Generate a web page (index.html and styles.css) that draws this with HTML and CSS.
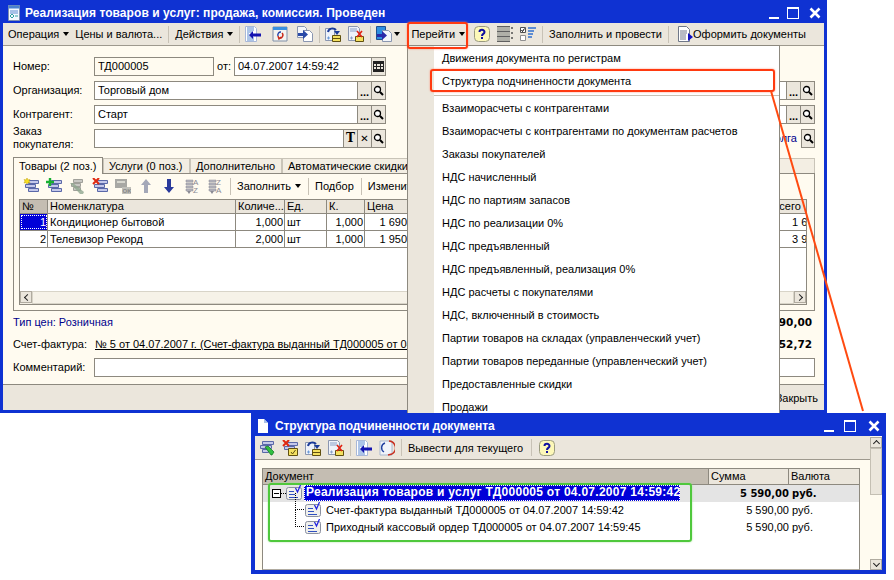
FILE: index.html
```html
<!DOCTYPE html>
<html lang="en">
<head>
  <meta charset="UTF-8" />
  <title>Структура подчиненности документа</title>
  <link rel="stylesheet" href="styles.css">
</head>
<body>
  <svg class="defs" width="0" height="0">
    <defs>
      <symbol id="i-form" viewBox="0 0 12 16"><path d="M.5 .5h11v15H.5z" fill="#f4f8ff" stroke="#8090b0"/><path d="M.5 .5h11v3H.5z" fill="#4a80d0"/><path d="M2 6h8M2 8h8" stroke="#5a8ad0"/><path d="M2 11l2 2 2-2-2-2zM7 11h3" fill="none" stroke="#30a0a0"/></symbol>
      <symbol id="i-back" viewBox="0 0 16 16"><path d="M.5 .5h9l2 2v13H.5z" fill="#fff" stroke="#a8b8d8"/><path d="M2 2h7M2 4h7M2 6h5M2 8h2M2 10h4M2 12h7M2 14h7" stroke="#5a8ad0"/><path d="M4 9l4-4v2.500h8v3H8V13z" fill="#1414b0"/></symbol>
      <symbol id="i-cal" viewBox="0 0 16 16"><path d="M1 1h14v14H1z" fill="#f4f4f0" stroke="#8090a8"/><path d="M1 1h14v3H1z" fill="#3a90e0"/><path d="M9 6a3 3 0 00-3 4" fill="none" stroke="#2040a8" stroke-width="1.400"/><path d="M7 12a3 3 0 003-5M6 10l1 3 2-2" fill="none" stroke="#c82818" stroke-width="1.400"/></symbol>
      <symbol id="i-pages" viewBox="0 0 16 16"><path d="M.5 .5h7l2 2v9h-9z" fill="#f4f6fa" stroke="#8a96b0"/><path d="M6.500 4.500h6l3 3v8h-9z" fill="#fff" stroke="#8a96b0"/><path d="M1 7h5V4l5 4.500L6 13v-3H1z" fill="#2a4aa8"/></symbol>
      <symbol id="i-doc-up" viewBox="0 0 16 16"><path d="M.5 2.500h9v12h-9z" fill="#eef2fa" stroke="#8a96b0"/><path d="M2 12h3M3.500 10.500v3" stroke="#6a9ad8"/><path d="M7.500 9.500h8v6h-8z" fill="#f4e060" stroke="#605010"/><path d="M7.500 12.500h8" stroke="#605010"/><path d="M3 6a4.500 4 0 018-2" fill="none" stroke="#1a3a98" stroke-width="2"/><path d="M9 5h6l-3 4z" fill="#1a3a98"/></symbol>
      <symbol id="i-doc-x" viewBox="0 0 16 16"><path d="M.5 .5h9l2 2v12H.5z" fill="#eef2fa" stroke="#8a96b0"/><path d="M2 3h7M2 5h7M2 12h3M3.500 10.500v3" stroke="#8aa0c8"/><path d="M7.500 10.500h8v5h-8z" fill="#f4e060" stroke="#605010"/><path d="M9 5l5 6M14 5l-5 6" stroke="#e02010" stroke-width="1.600"/></symbol>
      <symbol id="i-goto" viewBox="0 0 16 16"><path d="M.5 .5h9v13h-9z" fill="#2f8fe0" stroke="#205090"/><path d="M6.500 4.500h6l3 3v8h-9z" fill="#f4f6fa" stroke="#8a96b0"/><path d="M1 8h5V5l5 4.500L6 14v-3H1z" fill="#2a2aa8"/></symbol>
      <symbol id="i-help" viewBox="0 0 16 16"><rect x=".5" y=".5" width="15" height="15" rx="4" fill="#fdf8b8" stroke="#9a9a80"/><path d="M5.500 6a2.500 2.200 0 015 0c0 2-2.500 1.800-2.500 4" fill="none" stroke="#1010a0" stroke-width="2"/><path d="M7 11h2v2H7z" fill="#1010a0"/></symbol>
      <symbol id="i-rows" viewBox="0 0 16 16"><path d="M0 1h13v4H0zM0 6h13v4H0zM0 11h13v4H0z" fill="#b0b0a8"/><path d="M0 .5h13M0 5.500h13M0 10.500h13M0 15.500h13" stroke="#606060"/><path d="M14 2h2M15 1v2M14 7h2M15 6v2M14 12h2M15 11v2" stroke="#505050"/></symbol>
      <symbol id="i-check" viewBox="0 0 16 16"><path d="M.5 1.500h5v5h-5z" fill="#fff" stroke="#505050"/><path d="M1.500 4l1 1.500 2-3" fill="none" stroke="#000"/><path d="M.5 9.500h5v5h-5z" fill="#fff" stroke="#909090"/><path d="M8 2h8M8 5h6M8 8h5M8 11h4" stroke="#3070d0" stroke-width="1.500"/></symbol>
      <symbol id="i-fill" viewBox="0 0 16 16"><path d="M.5 .5h8l3 3v12H.5z" fill="#fff" stroke="#707888"/><path d="M2 5h7M2 7h7M2 9h6M2 11h6M2 13h6" stroke="#707888"/><path d="M10 7l5 4-5 4z" fill="#1010c0"/></symbol>
      <symbol id="i-cols" viewBox="0 0 16 16"><path d="M5.500 2.500h10v3h-10zM2.500 6.500h10v3h-10zM5.500 10.500h10v3h-10z" fill="#c4c8ea" stroke="#5a68a8"/></symbol>
      <symbol id="i-row-new" viewBox="0 0 16 16"><use href="#i-cols"/><path d="M4 0l1 2 2-.500L6 3l1 2-2-.500L4 6 3 4.500 1 5l1-2-1-1.500 2 .500z" fill="#f8e020" stroke="#c0a000" stroke-width=".5"/></symbol>
      <symbol id="i-row-add" viewBox="0 0 16 16"><use href="#i-cols"/><path d="M0 4h8M4 0v8" stroke="#18b030" stroke-width="2.400"/></symbol>
      <symbol id="i-row-edit" viewBox="0 0 16 16"><path d="M4.500 1.500h9v3h-9zM2.500 5.500h9v3h-9zM4.500 9.500h7v3h-7z" fill="#c8c8c4" stroke="#a0a09a"/><path d="M1 5l3 0 11 9-1 2-3 0z" fill="#90a890" opacity=".8"/></symbol>
      <symbol id="i-row-edit2" viewBox="0 0 16 16"><path d="M3.500 1.500h11v3h-11zM1.500 5.500h11v3h-11zM3.500 9.500h6v3h-6z" fill="#c4c8ea" stroke="#5a68a8"/><path d="M6 7l3-1 6 6-2 3-1 0z" fill="#30c040" stroke="#107020" stroke-width=".7"/></symbol>
      <symbol id="i-row-del" viewBox="0 0 16 16"><use href="#i-cols"/><path d="M1 0l6 6M7 0L1 6" stroke="#e02810" stroke-width="2"/></symbol>
      <symbol id="i-row-delbox" viewBox="0 0 16 16"><path d="M5.500 2.500h10v3h-10zM2.500 6.500h10v3h-10z" fill="#c4c8ea" stroke="#5a68a8"/><path d="M1 0l6 6M7 0L1 6" stroke="#e02810" stroke-width="2"/><path d="M6.500 8.500h9v7h-9z" fill="#f4e060" stroke="#605010"/><path d="M9 12l1.500 2 3-4" fill="none" stroke="#605010"/></symbol>
      <symbol id="i-ok" viewBox="0 0 16 16"><path d="M0 1h12v9H0z" fill="#a8a8a4"/><path d="M2 3h8v2H2z" fill="#d8d8d0"/><path d="M7 9h9v7H7z" fill="#c0c0ba"/><text x="7.500" y="15" font-size="6" font-weight="bold" font-family="Liberation Sans" fill="#888">OK</text></symbol>
      <symbol id="i-up" viewBox="0 0 16 16"><path d="M8 1l5 6h-3v8H6V7H3z" fill="#a4a8b8"/></symbol>
      <symbol id="i-down" viewBox="0 0 16 16"><path d="M8 15l5-6h-3V1H6v8H3z" fill="#2a3a9c"/></symbol>
      <symbol id="i-sort" viewBox="0 0 16 16"><path d="M2 2h7v2H2zM2 5h7v2H2zM2 8h7v2H2zM2 11h7v2H2z" fill="#b8b8c0" stroke="#8a8a94" stroke-width=".5"/><path d="M3 13h4l-2 3z" fill="#8a8a94"/></symbol>
      <symbol id="i-doc-check" viewBox="0 0 16 16"><rect x=".5" y="2.500" width="15" height="12" rx="2" fill="#f0f0ec" stroke="#8a90a0"/><path d="M3 6.500h5M3 9.500h6M3 12.500h9" stroke="#3050c0"/><path d="M9.500 3l2 4 3-7" fill="none" stroke="#2020e0" stroke-width="1.200"/></symbol>
      <symbol id="i-refresh" viewBox="0 0 16 16"><path d="M1 1h12v14H1z" fill="#f0f4fa" stroke="#a8b8d0"/><path d="M6 3a5 5 0 00-1 9" fill="none" stroke="#2040a0" stroke-width="1.400"/><path d="M10 1a7 7 0 013 13M9 15l4-1" fill="none" stroke="#c83020" stroke-width="1.400"/></symbol>
      <symbol id="i-find" viewBox="0 0 11 11"><circle cx="4.500" cy="4.500" r="3" fill="#fff" stroke="#000" stroke-width="1.300"/><path d="M7 7l3 3" stroke="#000" stroke-width="2"/></symbol>
      <symbol id="i-calgrid" viewBox="0 0 11 11"><path d="M0 0h11v11H0z" fill="#222"/><path d="M1 3h2v2H1zM4 3h3v2H4zM8 3h2v2H8zM1 6h2v2H1zM4 6h3v2H4zM8 6h2v2H8z" fill="#ebe6dc"/></symbol>
      <symbol id="i-close" viewBox="0 0 12 12"><path d="M1.500 1.500l9 9M10.500 1.500l-9 9" stroke="#fff" stroke-width="2.600"/></symbol>
    </defs>
  </svg>

  <!-- Main document window -->
  <section class="window doc-window">
    <header class="titlebar">
      <svg class="title-icon" width="12" height="16"><use href="#i-form"/></svg>
      <span class="title">Реализация товаров и услуг: продажа, комиссия. Проведен</span>
      <span class="title-btns"><i class="wb wb-min"></i><i class="wb wb-max"></i><svg class="wb"><use href="#i-close"/></svg></span>
    </header>

    <div class="toolbar doc-bar">
      <span class="tb-text">Операция <b class="arrow"></b></span>
      <span class="tb-text">Цены и валюта...</span>
      <i class="sep"></i>
      <span class="tb-text">Действия <b class="arrow"></b></span>
      <i class="sep"></i>
      <svg class="ic"><use href="#i-back"/></svg>
      <svg class="ic ml8"><use href="#i-cal"/></svg>
      <svg class="ic ml6"><use href="#i-pages"/></svg>
      <i class="sep"></i>
      <svg class="ic"><use href="#i-doc-up"/></svg>
      <svg class="ic ml4"><use href="#i-doc-x"/></svg>
      <i class="sep"></i>
      <svg class="ic"><use href="#i-goto"/></svg><b class="arrow close-arrow"></b>
      <span class="tb-text goto">Перейти <b class="arrow"></b></span>
      <svg class="ic help"><use href="#i-help"/></svg>
      <svg class="ic ml4"><use href="#i-rows"/></svg>
      <svg class="ic ml4"><use href="#i-check"/></svg>
      <i class="sep"></i>
      <span class="tb-text">Заполнить и провести</span>
      <i class="sep"></i>
      <svg class="ic ml6"><use href="#i-fill"/></svg>
      <span class="tb-text tight">Оформить документы</span>
    </div>

    <div class="form">
      <div class="row">
        <label class="lbl">Номер:</label>
        <span class="field num">ТД000005</span>
        <span class="from">от:</span>
        <span class="field date">04.07.2007 14:59:42</span>
        <span class="fbtn"><svg width="11" height="11"><use href="#i-calgrid"/></svg></span>
      </div>
      <div class="row split">
        <div class="left">
          <label class="lbl">Организация:</label>
          <span class="field grow">Торговый дом</span>
          <span class="fbtn dots">...</span>
          <span class="fbtn"><svg width="11" height="11"><use href="#i-find"/></svg></span>
        </div>
        <div class="right">
          <span class="field grow"></span>
          <span class="fbtn dots">...</span>
          <span class="fbtn"><svg width="11" height="11"><use href="#i-find"/></svg></span>
        </div>
      </div>
      <div class="row split">
        <div class="left">
          <label class="lbl">Контрагент:</label>
          <span class="field grow">Старт</span>
          <span class="fbtn dots">...</span>
          <span class="fbtn"><svg width="11" height="11"><use href="#i-find"/></svg></span>
        </div>
        <div class="right">
          <span class="field grow"></span>
          <span class="fbtn dots">...</span>
          <span class="fbtn"><svg width="11" height="11"><use href="#i-find"/></svg></span>
        </div>
      </div>
      <div class="row split">
        <div class="left">
          <label class="lbl two">Заказ покупателя:</label>
          <span class="field grow"></span>
          <span class="fbtn t">T</span>
          <span class="fbtn x">✕</span>
          <span class="fbtn"><svg width="11" height="11"><use href="#i-find"/></svg></span>
        </div>
        <div class="right end">
          <span class="link">Долга</span>
          <span class="fbtn"><svg width="11" height="11"><use href="#i-find"/></svg></span>
        </div>
      </div>

      <div class="tabs">
        <span class="tab on">Товары (2 поз.)</span>
        <span class="tab w2">Услуги (0 поз.)</span>
        <span class="tab w3">Дополнительно</span>
        <span class="tab w4">Автоматические скидки</span>
      </div>
      <div class="panel">
        <div class="subbar">
          <svg class="ic"><use href="#i-row-new"/></svg>
          <svg class="ic"><use href="#i-row-add"/></svg>
          <svg class="ic"><use href="#i-row-edit"/></svg>
          <svg class="ic"><use href="#i-row-del"/></svg>
          <svg class="ic"><use href="#i-ok"/></svg>
          <svg class="ic"><use href="#i-up"/></svg>
          <svg class="ic"><use href="#i-down"/></svg>
          <span class="sort-ic"><svg class="ic"><use href="#i-sort"/></svg><span class="az">A<br>Z</span></span>
          <span class="sort-ic"><svg class="ic"><use href="#i-sort"/></svg><span class="az">Z<br>A</span></span>
          <i class="sep"></i>
          <span class="tb-text">Заполнить <b class="arrow"></b></span>
          <i class="sep"></i>
          <span class="tb-text">Подбор</span>
          <i class="sep"></i>
          <span class="tb-text">Изменит</span>
        </div>
        <div class="grid">
          <div class="grid-rows">
            <div class="grid-row head">
              <span class="c c1 corner">№</span><span class="c c2">Номенклатура</span><span class="c c3">Количе...</span><span class="c c4">Ед.</span><span class="c c5">К.</span><span class="c c6">Цена</span><span class="c c-gap"></span><span class="c c7">Всего</span>
            </div>
            <div class="grid-row">
              <span class="c c1 current">1</span><span class="c c2">Кондиционер бытовой</span><span class="c c3 r">1,000</span><span class="c c4">шт</span><span class="c c5 r">1,000</span><span class="c c6 val">1 690</span><span class="c c-gap"></span><span class="c c7 val">1 6</span>
            </div>
            <div class="grid-row">
              <span class="c c1 r">2</span><span class="c c2">Телевизор Рекорд</span><span class="c c3 r">2,000</span><span class="c c4">шт</span><span class="c c5 r">1,000</span><span class="c c6 val">1 950</span><span class="c c-gap"></span><span class="c c7 val">3 9</span>
            </div>
          </div>
          <div class="hscroll"><span class="sb"><i class="chev left"></i></span><span class="sb-track"></span><span class="sb"><i class="chev right"></i></span></div>
        </div>
      </div>

      <div class="totals">
        <span class="price-type">Тип цен: Розничная</span>
        <b>5 590,00</b>
      </div>
      <div class="invoice">
        <label class="lbl">Счет-фактура:</label>
        <span class="invoice-link">№ 5 от 04.07.2007 г. (Счет-фактура выданный ТД000005 от 04</span>
        <b>852,72</b>
      </div>
      <div class="row comment">
        <label class="lbl">Комментарий:</label>
        <span class="field grow"></span>
      </div>
    </div>

    <footer class="statusbar"><span>Закрыть</span></footer>
  </section>

  <!-- Popup menu -->
  <nav class="menu">
    <div class="mi">Движения документа по регистрам</div>
    <div class="mi">Структура подчиненности документа</div>
    <div class="msep"></div>
    <div class="mi">Взаиморасчеты с контрагентами</div>
    <div class="mi">Взаиморасчеты с контрагентами по документам расчетов</div>
    <div class="mi">Заказы покупателей</div>
    <div class="mi">НДС начисленный</div>
    <div class="mi">НДС по партиям запасов</div>
    <div class="mi">НДС по реализации 0%</div>
    <div class="mi">НДС предъявленный</div>
    <div class="mi">НДС предъявленный, реализация 0%</div>
    <div class="mi">НДС расчеты с покупателями</div>
    <div class="mi">НДС, включенный в стоимость</div>
    <div class="mi">Партии товаров на складах (управленческий учет)</div>
    <div class="mi">Партии товаров переданные (управленческий учет)</div>
    <div class="mi">Предоставленные скидки</div>
    <div class="mi">Продажи</div>
  </nav>

  <!-- Structure window -->
  <section class="window struct-window">
    <header class="titlebar">
      <svg class="title-icon" width="10" height="14"><path d="M0 0h6l4 4v10H0z" fill="#fff"/><path d="M6 0v4h4z" fill="#a8c0e8"/></svg>
      <span class="title">Структура подчиненности документа</span>
      <span class="title-btns"><i class="wb wb-min"></i><i class="wb wb-max"></i><svg class="wb"><use href="#i-close"/></svg></span>
    </header>
    <div class="struct-body">
      <div class="struct-main">
        <div class="toolbar">
          <svg class="ic"><use href="#i-row-edit2"/></svg>
          <svg class="ic"><use href="#i-row-delbox"/></svg>
          <svg class="ic"><use href="#i-doc-up"/></svg>
          <svg class="ic"><use href="#i-doc-x"/></svg>
          <i class="sep after-icons"></i>
          <svg class="ic"><use href="#i-back"/></svg>
          <svg class="ic"><use href="#i-refresh"/></svg>
          <i class="sep"></i>
          <span class="tb-text">Вывести для текущего</span>
          <i class="sep before-help"></i>
          <svg class="ic"><use href="#i-help"/></svg>
        </div>
        <div class="tree">
          <div class="tree-head"><span class="h1">Документ</span><span class="h2">Сумма</span><span class="h3">Валюта</span></div>
          <div class="tree-row top">
            <div class="col-doc">
              <span class="expander"></span><i class="dots-h"></i>
              <svg class="doc-ic"><use href="#i-doc-check"/></svg>
              <span class="selected">Реализация товаров и услуг ТД000005 от 04.07.2007 14:59:42</span>
            </div>
            <span class="sum">5 590,00</span><span class="cur">руб.</span>
          </div>
          <div class="tree-row child">
            <div class="col-doc">
              <i class="branch"></i>
              <svg class="doc-ic"><use href="#i-doc-check"/></svg>
              <span class="name">Счет-фактура выданный ТД000005 от 04.07.2007 14:59:42</span>
            </div>
            <span class="sum">5 590,00</span><span class="cur">руб.</span>
          </div>
          <div class="tree-row child">
            <div class="col-doc">
              <i class="branch"></i>
              <svg class="doc-ic"><use href="#i-doc-check"/></svg>
              <span class="name">Приходный кассовый ордер ТД000005 от 04.07.2007 14:59:45</span>
            </div>
            <span class="sum">5 590,00</span><span class="cur">руб.</span>
          </div>
        </div>
      </div>
      <div class="vscroll"><span class="sb"><i class="chev up"></i></span><span class="vthumb"></span><span class="vspace"></span><span class="sb"><i class="chev down"></i></span></div>
    </div>
  </section>

  <!-- Annotations -->
  <i class="mark mark-goto"></i>
  <i class="mark mark-item"></i>
  <i class="mark mark-green"></i>
  <svg class="leader" width="894" height="580"><line x1="771" y1="91" x2="863" y2="411" stroke="#ff4a10" stroke-width="2"/></svg>
</body>
</html>
```

FILE: styles.css
```css
* { box-sizing: border-box; }
html, body { margin: 0; padding: 0; }
body {
  width: 894px;
  height: 580px;
  background: #fff;
  position: relative;
  overflow: hidden;
  font-family: "Liberation Sans", sans-serif;
  font-size: 11px;
  color: #000;
}
.defs { position: absolute; }
i { font-style: normal; }

.window {
  position: absolute;
  background: #0f32d2;
  display: flex;
  flex-direction: column;
  overflow: hidden;
}
.doc-window { left: 0; top: 0; width: 827px; height: 413px; padding: 0 3px 3px; }
.struct-window { left: 251px; top: 413px; width: 635px; height: 161px; padding: 0 3px 3px; border: 1px solid #0f32d2; }

.titlebar {
  height: 23px;
  flex: none;
  display: flex;
  align-items: center;
  color: #fff;
  padding: 3px 3px 0 5px;
}
.struct-window .titlebar { height: 22px; padding: 1px 2px 0 3px; }
.title { font: bold 12px "Liberation Sans", sans-serif; letter-spacing: .07px; margin-left: 5px; white-space: nowrap; }
.struct-window .title { margin-left: 7px; letter-spacing: -.09px; }
.title-btns { margin-left: auto; display: flex; align-items: center; gap: 8px; }
.struct-window .title-btns { gap: 10px; }
.wb { display: block; width: 12px; height: 12px; position: relative; }
.wb-min { width: 10px; }
.wb-min::after { content: ""; position: absolute; left: 0; right: 0; bottom: 0; height: 2px; background: #fff; }
.wb-max { border: 1px solid #fff; border-top-width: 2px; margin-right: 2px; }

.toolbar, .subbar {
  display: flex;
  align-items: center;
  white-space: nowrap;
}
.toolbar {
  height: 23px;
  flex: none;
  background: #ebe6dc;
  border-bottom: 1px solid #9e998e;
  overflow: hidden;
}
.doc-bar { padding-left: 2px; }
.tb-text { padding: 0 3px; display: inline-flex; align-items: center; gap: 3px; }
.tb-text.tight { padding-left: 0; margin-left: -4px; }
.goto { margin-left: 8px; }
.arrow { display: inline-block; border: 3px solid transparent; border-top: 4px solid #000; border-bottom: 0; margin-left: 1px; }
.close-arrow { margin-left: -1px; }
.sep { width: 1px; height: 17px; background: #c8c2b6; margin: 0 3px; flex: none; }
.ic { width: 16px; height: 16px; margin: 0 3.500px; flex: none; }
.doc-bar .ic { margin: 0 3px 0 2px; }
.doc-bar .help { margin-left: 6px; }
.doc-bar .ml4 { margin-left: 4px; }
.doc-bar .ml6 { margin-left: 6px; }
.doc-bar .ml8 { margin-left: 8px; }

.form { flex: 1; background: #fffbf0; padding: 10px 9px 0 10px; min-height: 0; display: flex; flex-direction: column; }
.row { display: flex; align-items: center; height: 20px; margin-bottom: 4px; }
.row.split { justify-content: space-between; }
.left, .right { display: flex; align-items: center; height: 100%; }
.left { width: 373px; }
.right { width: 60px; }
.right.end { justify-content: flex-end; }
.lbl { width: 81px; flex: none; line-height: 13px; }
.lbl.two { width: 70px; margin-right: 11px; }
.field {
  height: 19px;
  line-height: 17px;
  background: #fff;
  border: 1px solid #8d897f;
  padding: 0 3px;
  white-space: nowrap;
  overflow: hidden;
}
.field.grow { flex: 1; }
.field.num { width: 120px; background: #fffbf0; }
.from { width: 20px; text-align: right; padding-right: 3px; }
.field.date { width: 138px; }
.fbtn {
  width: 14px;
  height: 19px;
  flex: none;
  background: #ebe6dc;
  border: 1px solid #8d897f;
  border-left-width: 0;
  display: flex;
  align-items: center;
  justify-content: center;
}
.fbtn.dots { align-items: flex-end; font-weight: bold; line-height: 14px; }
.fbtn.t { font: bold 12px "DejaVu Serif", serif; }
.fbtn.x { font: bold 10px "DejaVu Sans", sans-serif; }
.link { color: #00008c; margin-right: 4px; }
.right.end .fbtn { border-left-width: 1px; }

.tabs { display: flex; height: 17px; margin-top: 4px; align-items: flex-end; }
.tab {
  height: 15px;
  line-height: 14px;
  padding-left: 5px;
  background: #f3eee3;
  border: 1px solid #c9c4b8;
  border-bottom: 0;
  white-space: nowrap;
  overflow: hidden;
}
.tab.on { width: 90px; height: 17px; line-height: 16px; background: #fffbf0; border-color: #8d897f; position: relative; top: 1px; z-index: 1; }
.tab.w2 { width: 87px; }
.tab.w3 { width: 92px; }
.tab.w4 { flex: 1; }

.panel { height: 138px; border: 1px solid #8d897f; padding: 2px 7px 5px 5px; display: flex; flex-direction: column; }
.subbar { height: 20px; flex: none; overflow: hidden; }
.sort-ic { display: flex; position: relative; }
.az { position: absolute; left: 13px; top: 1px; font-size: 8px; line-height: 8px; color: #8a8a94; }
.subbar .sep { margin: 0 3px 0 4px; }
.grid { flex: 1; margin-top: 3px; border: 1px solid #8d897f; background: #fff; display: flex; flex-direction: column; overflow: hidden; }
.grid-rows { flex: 1; }
.grid-row { display: flex; height: 17px; border-bottom: 1px solid #8d897f; }
.grid-row.head { height: 14px; background: #ebe6dc; }
.c { height: 100%; border-right: 1px solid #8d897f; padding: 0 1px 0 2px; line-height: 17px; white-space: nowrap; overflow: hidden; flex: none; }
.head .c { line-height: 13px; }
.c.r { text-align: right; }
.c1 { width: 28px; }
.c2 { width: 188px; }
.c3 { width: 49px; }
.c4 { width: 42px; }
.c5 { width: 38px; }
.c6 { width: 42px; border-right: 0; }
.c6.val { text-align: right; padding-right: 0; }
.c-gap { width: 365px; border-right: 0; }
.c7 { flex: 1; border-right: 0; padding: 0; }
.c7.val { padding-left: 20px; }
.corner { background: #c4bdb2; }
.current { background: #0000d8; color: #fff; text-align: right; outline: 1px dotted #fff; outline-offset: -2px; }
.hscroll { height: 13px; flex: none; display: flex; background: #f3eee3; }
.sb { width: 12px; height: 12px; background: #ebe6dc; border: 1px solid #b0aba0; display: flex; align-items: center; justify-content: center; flex: none; }
.sb-track { flex: 1; background: #f6f2e8; border: 1px solid #d8d4c8; }
.chev { width: 5px; height: 5px; border-left: 1px solid #222; border-top: 1px solid #222; }
.chev.left { transform: rotate(-45deg); margin-left: 2px; }
.chev.right { transform: rotate(135deg); margin-right: 2px; }
.chev.up { transform: rotate(45deg); margin-top: 2px; }
.chev.down { transform: rotate(225deg); margin-bottom: 2px; }

.totals, .invoice { display: flex; align-items: center; white-space: nowrap; overflow: hidden; }
.totals { height: 22px; justify-content: space-between; }
.price-type { color: #00008c; }
.totals b, .invoice b { font: bold 10.500px "DejaVu Sans", sans-serif; margin-right: 3px; }
.invoice { height: 22px; }
.invoice .lbl { width: 82px; }
.invoice-link { text-decoration: underline; flex: 1; overflow: hidden; }
.row.comment { height: 20px; margin-top: 2px; margin-bottom: 0; }

.statusbar { height: 26px; flex: none; background: #ebe6dc; border-top: 1px solid #8d897f; display: flex; align-items: center; justify-content: flex-end; padding-right: 6px; }

.menu {
  position: absolute;
  left: 407px;
  top: 45px;
  width: 373px;
  height: 369px;
  padding: 1px 0 0 26px;
  background: linear-gradient(#fff, #fff) 26px 0 / 100% 100% no-repeat #ebe6dc;
  border: 1px solid #8d897f;
  overflow: hidden;
  white-space: nowrap;
}
.mi { height: 23px; line-height: 23px; padding-left: 8px; }
.msep { height: 1px; margin: 2px 0 1px 0; background: #c8c2b6; }

.struct-body { flex: 1; display: flex; background: #fffbf0; min-height: 0; }
.struct-main { flex: 1; min-width: 0; }
.struct-window .toolbar { height: 24px; }
.after-icons { margin-right: 1px; }
.before-help { margin-left: 5px; }
.tree { margin: 8px 10px 0 7px; height: 102px; border: 1px solid #8d897f; border-bottom-color: #b0aba0; background: #fff; overflow: hidden; }
.tree-head { display: flex; height: 16px; line-height: 15px; border-bottom: 1px solid #8d897f; }
.tree-head span { padding-left: 2px; border-right: 1px solid #8d897f; background: #ebe6dc; }
.tree-head .h1 { width: 446px; background: #c4bdb2; }
.h2 { width: 80px; }
.tree-head .h3 { flex: 1; border-right: 0; }
.tree-row { display: flex; align-items: center; height: 17px; white-space: nowrap; padding-bottom: 1px; }
.col-doc { width: 446px; height: 100%; flex: none; display: flex; align-items: center; position: relative; }
.top { background: #e4e4e4; }
.top .col-doc { padding-left: 9px; }
.child .col-doc { padding-left: 42px; }
.expander { width: 9px; height: 9px; border: 1px solid #000; background: linear-gradient(#000, #000) center / 5px 1px no-repeat #fff; flex: none; }
.dots-h { width: 5px; border-top: 1px dotted #000; flex: none; }
.doc-ic { width: 16px; height: 16px; flex: none; margin-right: 2px; }
.selected { font: bold 12px "Liberation Sans", sans-serif; letter-spacing: .27px; background: #0000d8; color: #fff; outline: 1px dotted #fff; outline-offset: -1px; height: 16px; line-height: 15px; padding: 0 2px; width: 376px; overflow: hidden; flex: none; }
.branch { position: absolute; left: 32px; top: -9px; height: 17px; width: 9px; border-left: 1px dotted #000; border-bottom: 1px dotted #000; }
.child .doc-ic { margin-right: 5px; }
.sum { width: 80px; flex: none; text-align: right; }
.cur { padding-left: 3px; }
.top .sum, .top .cur { font: bold 10px "DejaVu Sans", sans-serif; }
.vscroll { width: 12px; flex: none; margin: 1px 0 0; display: flex; flex-direction: column; }
.vthumb { height: 47px; background: #ebe6dc; border: 1px solid #c4bfb3; }
.vspace { flex: 1; }
.vscroll .sb { height: 11px; }

.mark { position: absolute; display: block; border-radius: 3px; pointer-events: none; }
.mark-goto { left: 407px; top: 22px; width: 61px; height: 27px; border: 2px solid #ff3a10; box-shadow: 0 0 2px #ff8a70; }
.mark-item { left: 430px; top: 69px; width: 345px; height: 23px; border: 2px solid #ff3a10; box-shadow: 0 0 2px #ff8a70; }
.mark-green { left: 268px; top: 483px; width: 424px; height: 59px; border: 2px solid #4fc83c; box-shadow: 0 0 2px #9fe090; }
.leader { position: absolute; left: 0; top: 0; pointer-events: none; }
```
